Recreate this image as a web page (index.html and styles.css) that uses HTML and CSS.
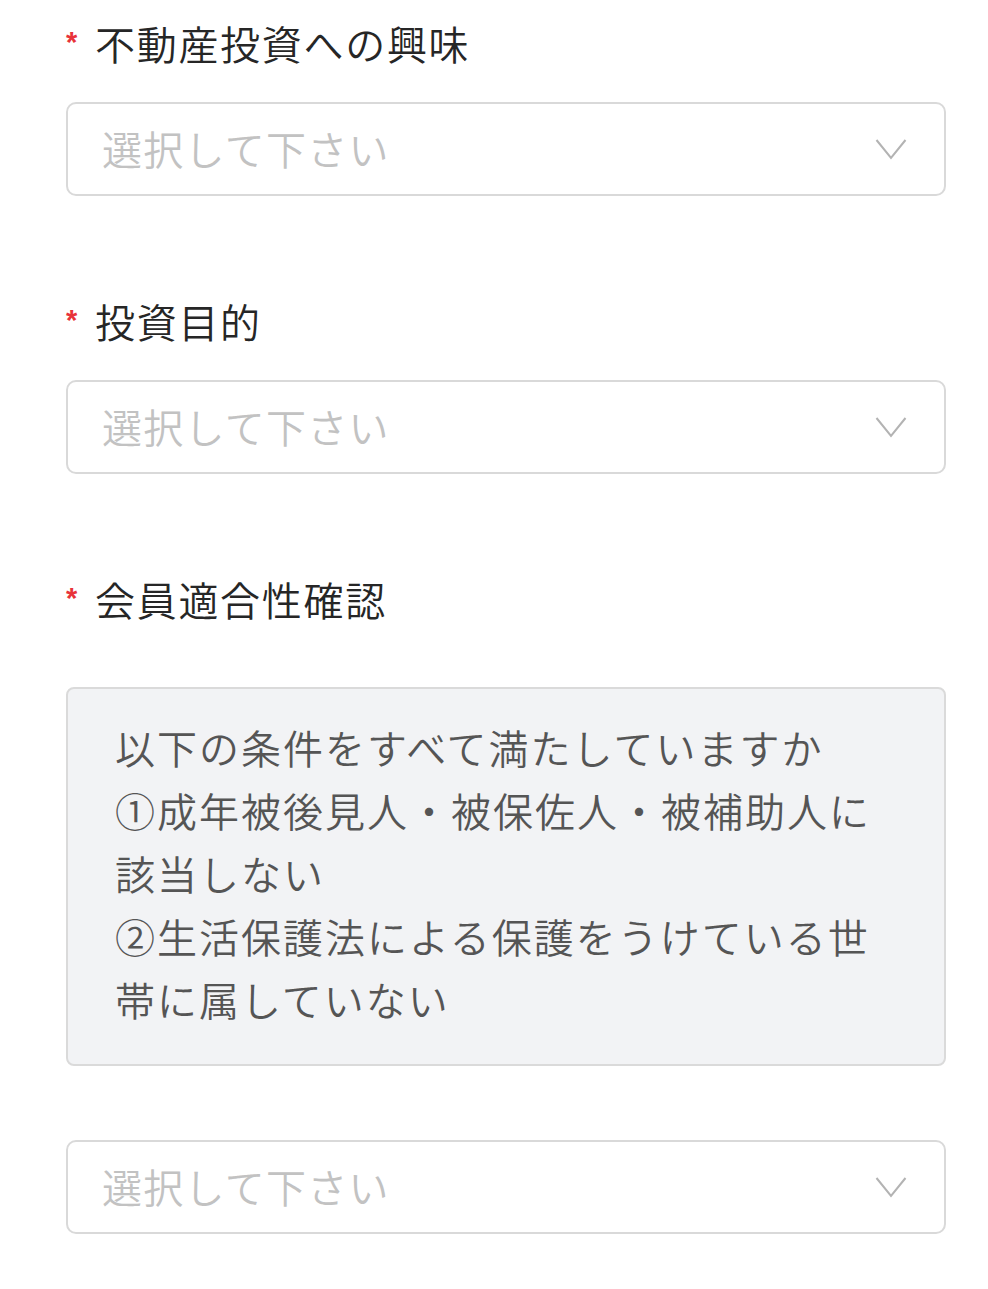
FILE: index.html
```html
<!DOCTYPE html>
<html lang="ja">
<head>
<meta charset="utf-8">
<link rel="stylesheet" href="styles.css">
</head>
<body>
<form class="form">
  <div class="field">
    <div class="label"><span class="req">*</span><span class="label-text">不動産投資への興味</span></div>
    <div class="select">
      <span class="placeholder">選択して下さい</span>
      <svg class="chev" width="32" height="22" viewBox="0 0 32 22"><polyline points="1.5,2 16,20 30.5,2" fill="none" stroke="#b3b3b3" stroke-width="2"/></svg>
    </div>
  </div>
  <div class="field">
    <div class="label"><span class="req">*</span><span class="label-text">投資目的</span></div>
    <div class="select">
      <span class="placeholder">選択して下さい</span>
      <svg class="chev" width="32" height="22" viewBox="0 0 32 22"><polyline points="1.5,2 16,20 30.5,2" fill="none" stroke="#b3b3b3" stroke-width="2"/></svg>
    </div>
  </div>
  <div class="field">
    <div class="label label-info"><span class="req">*</span><span class="label-text">会員適合性確認</span></div>
    <div class="info">以下の条件をすべて満たしていますか<br>①成年被後見人・被保佐人・被補助人に該当しない<br>②生活保護法による保護をうけている世帯に属していない</div>
    <div class="select">
      <span class="placeholder">選択して下さい</span>
      <svg class="chev" width="32" height="22" viewBox="0 0 32 22"><polyline points="1.5,2 16,20 30.5,2" fill="none" stroke="#b3b3b3" stroke-width="2"/></svg>
    </div>
  </div>
</form>
</body>
</html>
```
FILE: styles.css
```css
html, body {
  margin: 0;
  padding: 0;
  background: #ffffff;
}
body {
  font-family: "Noto Sans CJK JP", "Noto Sans", sans-serif;
  font-weight: 350;
}
.form {
  padding: 17px 42px 0 66px;
  display: flex;
  flex-direction: column;
}
.field {
  display: flex;
  flex-direction: column;
  margin-bottom: 99px;
}
.label {
  display: flex;
  align-items: flex-start;
  height: 56px;
  margin-bottom: 29px;
}
.label-info {
  margin-bottom: 58px;
}
.req {
  color: #e8333a;
  font-family: "Liberation Sans", sans-serif;
  font-weight: 700;
  font-size: 29px;
  line-height: 29px;
  width: 29px;
  margin-top: 11px;
}
.label-text {
  font-size: 40px;
  line-height: 53px;
  letter-spacing: 1.7px;
  color: #262626;
}
.select {
  box-sizing: border-box;
  height: 94px;
  border: 2px solid #d9d9d9;
  border-radius: 10px;
  display: flex;
  align-items: center;
  justify-content: space-between;
  padding: 0 37px 0 34px;
}
.placeholder {
  font-size: 40px;
  letter-spacing: 1.3px;
  color: #c2c2c2;
  line-height: 56px;
  margin-top: -3px;
}
.chev {
  display: block;
}
.info {
  box-sizing: border-box;
  background: #f2f3f5;
  border: 2px solid #dadada;
  border-radius: 8px;
  padding: 27px 40px 32px 47px;
  font-size: 40px;
  line-height: 63px;
  letter-spacing: 2px;
  color: #555555;
  margin-bottom: 74px;
  height: 379px;
}
```
